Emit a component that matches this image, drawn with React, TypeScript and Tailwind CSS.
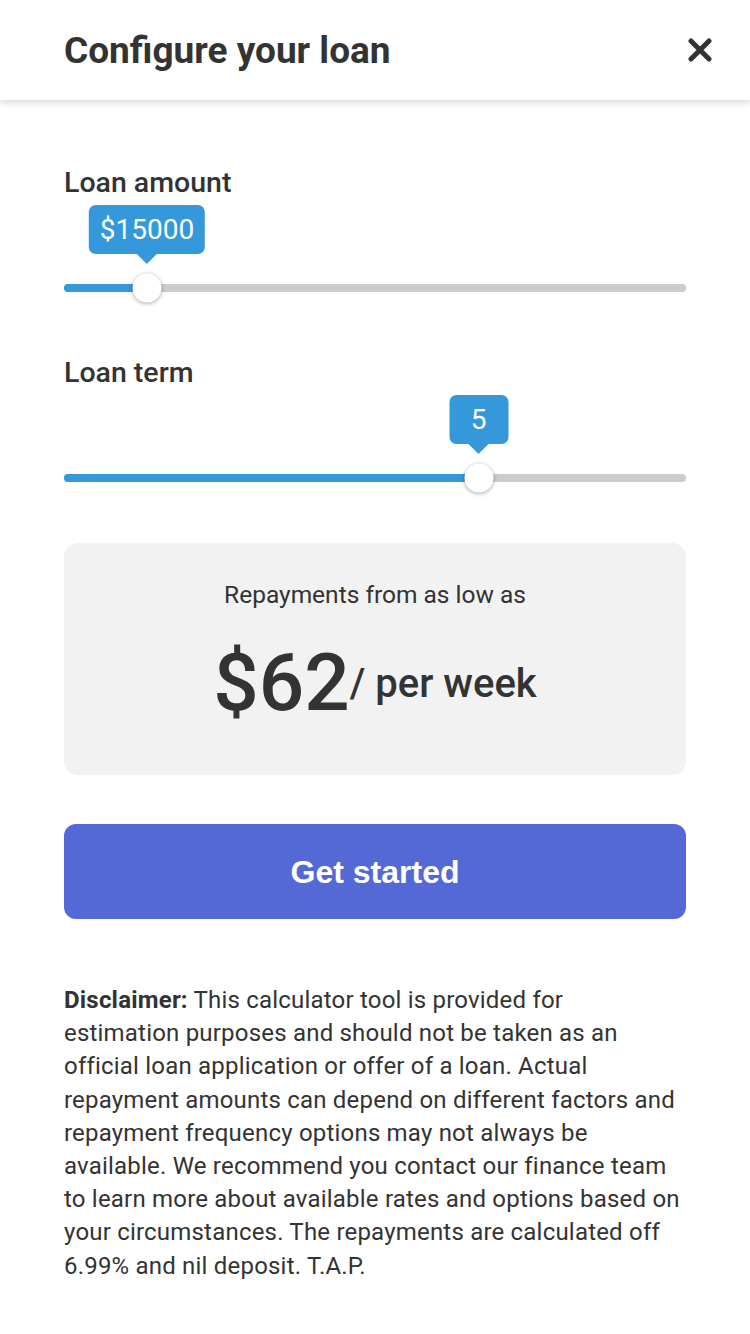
import React from "react";

const roboto = { fontFamily: "Roboto, 'Noto Sans', sans-serif" };

function Slider({ label, value, pct }: { label: string; value: string; pct: number }) {
  return (
    <div>
      <div className="text-[28.5px] leading-[34px] font-medium text-[#333333]">{label}</div>
      <div className="relative pt-[84px] pb-[64px]">
        <div className="relative h-2 w-full rounded-full bg-[#cccccc]">
          <div className="absolute left-0 top-0 h-2 rounded-full bg-[#3498db]" style={{ width: `${pct}%` }} />
          <div
            className="absolute top-1/2 h-[29px] w-[29px] -translate-x-1/2 -translate-y-1/2 rounded-full bg-white shadow-[0_1px_4px_rgba(0,0,0,0.35)]"
            style={{ left: `${pct}%` }}
          />
          <div
            className="absolute bottom-[28px] flex -translate-x-1/2 flex-col items-center"
            style={{ left: `${pct}%` }}
          >
            <div className="flex h-[49px] min-w-[59px] items-center justify-center rounded-[7px] bg-[#3498db] px-[11px] text-[28px] leading-none text-white">
              {value}
            </div>
            <div className="h-0 w-0 border-x-[10px] border-t-[10px] border-x-transparent border-t-[#3498db]" />
          </div>
        </div>
      </div>
    </div>
  );
}

const lines = [
  "estimation purposes and should not be taken as an",
  "official loan application or offer of a loan. Actual",
  "repayment amounts can depend on different factors and",
  "repayment frequency options may not always be",
  "available. We recommend you contact our finance team",
  "to learn more about available rates and options based on",
  "your circumstances. The repayments are calculated off",
  "6.99% and nil deposit. T.A.P.",
];

export default function App() {
  return (
    <div className="min-h-[1334px] w-[750px] bg-white text-[#333333]" style={roboto}>
      <header className="relative z-10 flex h-[100px] items-center justify-between bg-white pl-[64px] pr-[38px] shadow-[0_2px_8px_rgba(0,0,0,0.18)]">
        <h1 className="text-[37px] font-bold leading-none text-[#333333]">Configure your loan</h1>
        <svg width="24" height="24" viewBox="0 0 24 24" className="text-[#333333]">
          <path d="M3 3 L21 21 M21 3 L3 21" stroke="currentColor" strokeWidth="5" strokeLinecap="round" />
        </svg>
      </header>

      <main className="px-[64px] pt-[66px]">
        <Slider label="Loan amount" value="$15000" pct={13.33} />
        <Slider label="Loan term" value="5" pct={66.67} />

        <div className="-mt-[3px] flex h-[232px] flex-col items-center rounded-[14px] bg-[#f2f2f2] pt-[36px]">
          <div className="text-[24.5px] leading-[32px] text-[#333333]">Repayments from as low as</div>
          <div className="mt-[25px] flex items-center">
            <span className="text-[80px] font-medium leading-[94px] text-[#333333]">$62</span>
            <span className="text-[40px] font-medium leading-[47px] text-[#333333]">/ per week</span>
          </div>
        </div>

        <button
          className="mt-[49px] flex h-[95px] w-full items-center justify-center rounded-[12px] bg-[#5569d6] text-[32px] font-bold text-white"
          style={{ fontFamily: "'Liberation Sans', Arial, sans-serif" }}
        >
          Get started
        </button>

        <div className="mt-[65px] text-[24px] leading-[33.2px] tracking-[0.2px] text-[#333333]">
          <div className="whitespace-nowrap">
            <span className="font-bold">Disclaimer:</span> This calculator tool is provided for
          </div>
          {lines.map((l) => (
            <div key={l} className="whitespace-nowrap">
              {l}
            </div>
          ))}
        </div>
      </main>
    </div>
  );
}
